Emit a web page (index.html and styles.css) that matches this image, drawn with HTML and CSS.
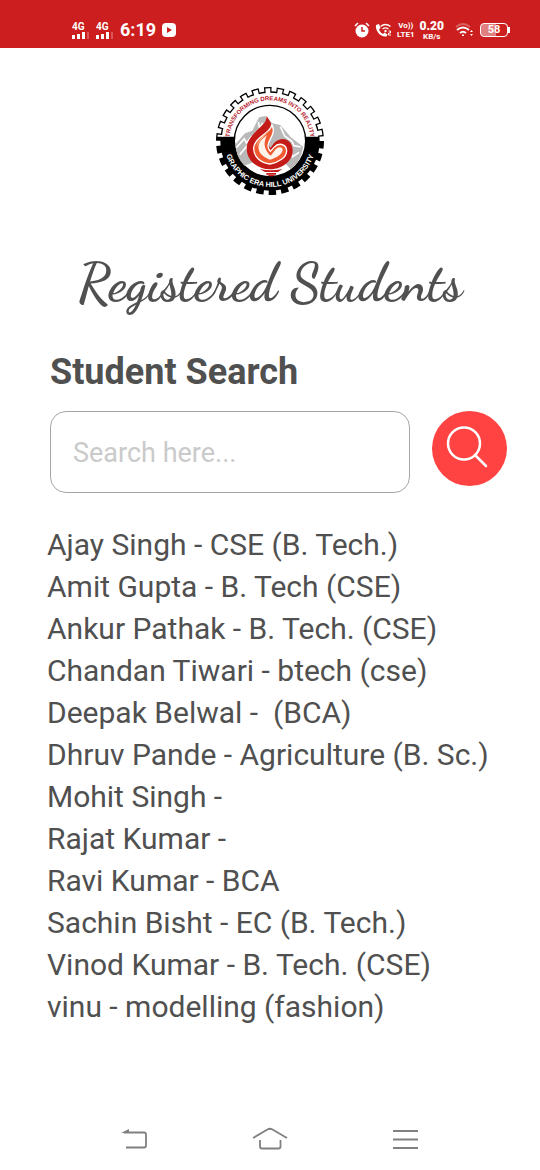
FILE: index.html
```html
<!DOCTYPE html>
<html lang="en">
<head>
<meta charset="utf-8">
<meta name="viewport" content="width=device-width, initial-scale=1">
<title>Registered Students</title>
<link rel="stylesheet" href="styles.css">
</head>
<body>
<header class="status">
  <div class="status-group">
    <div class="signal"><span>4G</span>
      <svg width="18" height="7" viewBox="0 0 18 7" fill="#fff"><path d="M0 3h3v4H0zM5 2h3v5H5zM10 0h3v7h-3z"/><path d="M15 0h2v7h-2z" opacity=".25"/></svg></div>
    <div class="signal"><span>4G</span>
      <svg width="18" height="7" viewBox="0 0 18 7" fill="#fff"><path d="M0 3h3v4H0zM5 2h3v5H5zM10 0h3v7h-3z"/><path d="M15 0h2v7h-2z" opacity=".25"/></svg></div>
    <time class="clock">6:19</time>
    <svg width="14" height="14" viewBox="0 0 14 14"><rect width="14" height="14" rx="4" fill="#fff"/><path d="M5 4l5 3-5 3z" fill="#cc1e1e"/></svg>
  </div>
  <div class="status-group status-right">
    <svg width="16" height="16" viewBox="0 0 16 16"><circle cx="8" cy="9" r="6.5" fill="#fff"/><path d="M1 4l3-3M15 4l-3-3" stroke="#fff" stroke-width="1.6"/><path d="M8 5v4h3" fill="none" stroke="#cc1e1e" stroke-width="1.5"/></svg>
    <svg width="17" height="16" viewBox="0 0 17 16"><path d="M1 3l3-1 1.500 4L4 7.500c1 2.500 2 3.500 4 4.500l1.500-1.500 3 2-1 2C6 15.500 0 9 1 3z" fill="#fff"/><path d="M5.500 4.500q5-4 10 0M7.500 7q3-2.200 6 0" fill="none" stroke="#fff" stroke-width="1.4"/><circle cx="10.500" cy="9" r="1.200" fill="#fff"/><path d="M13.500 9h2v2h-2v2h2.500" fill="none" stroke="#fff"/></svg>
    <div class="volte"><span>Vo))</span><span>LTE1</span></div>
    <div class="rate"><b>0.20</b><span>KB/s</span></div>
    <svg width="18" height="16" viewBox="0 0 18 16" fill="none" stroke="#fff" stroke-width="2"><path d="M1 5q7-6 14 0" opacity=".3"/><path d="M2 8q6-5 12 0M5 11q3-2.500 6 0"/><path d="M7 13h2l-1 1z" stroke-width="1"/><path d="M15 10l1.500-2L18 10zM15 12l1.500 2L18 12z" fill="#fff" stroke="none"/></svg>
    <div class="battery"><span>58</span></div>
  </div>
</header>

<main class="page">
  <svg class="logo" viewBox="33 36 324 324" role="img" aria-label="Graphic Era Hill University">
    <defs>
      <clipPath id="upper"><path d="M33 36h324v149H33z"/></clipPath>
      <path id="arc-top" d="M73 198a122 122 0 0 1 244 0"/>
      <path id="arc-low" d="M57 198a138 138 0 0 0 276 0"/>
    </defs>
    <circle cx="195" cy="198" r="149"/>
    <circle cx="195" cy="198" r="154" fill="none" stroke="#000" stroke-width="16" pathLength="260" stroke-dasharray="6 4"/>
    <g clip-path="url(#upper)">
      <circle cx="195" cy="198" r="145" fill="#fff"/>
      <circle cx="195" cy="198" r="150" fill="none" stroke="#fff" stroke-width="16" pathLength="260" stroke-dasharray="4 6" stroke-dashoffset="-1"/>
    </g>
    <circle cx="195" cy="198" r="107" fill="#fff" stroke="#000" stroke-width="4"/>
    <path d="M92 207l28-32 22-8 20-40 18-4 22 22 24 5 31 36 37 29q-5 44-37 68l-20-22-28 17h-38l-24-17-29 11q-26-26-26-65z" fill="#b9b9b9"/>
    <path d="M94 218l24-27 6 13 17-21M226 155l13 28 21 15 7 14 20 4M104 239l20-24 9 23M243 250l13-24 6 20 20-14M160 141l4 20 9-17" fill="none" stroke="#fff" stroke-width="5"/>
    <path d="M184 122C192 152 124 174 125 223c2 36 34 60 70 60 38-1 69-25 68-58-1-31-31-44-55-22l-12 16c-20-28 28-48-12-97z" fill="#c41a18"/>
    <path d="M200 148c2 24-52 38-54 70-1 28 22 46 49 49 26-4 50-20 50-40-1-20-24-26-38-10l-11 12c-24-27 24-47 4-81z" fill="#f05a30" stroke="#fff" stroke-width="4"/>
    <path d="M186 180c-20 16-28 28-25 43 3 15 17 25 34 31 19-5 37-16 38-29 0-10-13-11-21-2l-15 19c-17-16-25-34-11-62z" fill="#fff3ec"/>
    <path d="M193 157c-2 18-39 34-38 61 4-20 30-33 38-61z" fill="#ffb58c"/>
    <path d="M164 282q33 8 68 0l-13 9h-39zM184 294h29v5h-29zM188 300h21l-4 4h-12z" fill="#c41a18"/>
    <text class="motto"><textPath href="#arc-top" startOffset="50%">TRANSFORMING DREAMS INTO REALITY</textPath></text>
    <text class="university"><textPath href="#arc-low" startOffset="50%">GRAPHIC ERA HILL UNIVERSITY</textPath></text>
  </svg>

  <h1 class="title">Registered Students</h1>

  <form class="search">
    <label class="search-label" for="query">Student Search</label>
    <div class="search-row">
      <input class="search-input" id="query" type="text" placeholder="Search here...">
      <button class="search-button" type="button" aria-label="Search">
        <svg width="75" height="75" viewBox="0 0 75 75" fill="none" stroke="#fff" stroke-width="2.500" stroke-linecap="round"><circle cx="32" cy="32.500" r="16"/><path d="M43 44l11 11"/></svg>
      </button>
    </div>
  </form>

  <ul class="students">
    <li>Ajay Singh - CSE (B. Tech.)</li>
    <li>Amit Gupta - B. Tech (CSE)</li>
    <li>Ankur Pathak - B. Tech. (CSE)</li>
    <li>Chandan Tiwari - btech (cse)</li>
    <li>Deepak Belwal -&nbsp; (BCA)</li>
    <li>Dhruv Pande - Agriculture (B. Sc.)</li>
    <li>Mohit Singh -</li>
    <li>Rajat Kumar -</li>
    <li>Ravi Kumar - BCA</li>
    <li>Sachin Bisht - EC (B. Tech.)</li>
    <li>Vinod Kumar - B. Tech. (CSE)</li>
    <li>vinu - modelling (fashion)</li>
  </ul>
</main>

<nav class="system-nav">
  <button type="button" aria-label="Back"><svg width="36" height="24" viewBox="0 0 36 24"><path d="M7 5.500h20q2 0 2 2v11q0 2-2 2H9" fill="none" stroke="#808080" stroke-width="1.800"/><path d="M4 6l8-4v4z" fill="#808080"/></svg></button>
  <button type="button" aria-label="Home"><svg width="36" height="24" viewBox="0 0 36 24" fill="none" stroke="#808080" stroke-width="1.800"><path d="M1 11L15.500 2.500q2.500-1.500 5 0L35 11M8 13v6.500q0 2 2 2h16.500q2 0 2-2V13"/></svg></button>
  <button type="button" aria-label="Recent apps"><svg width="36" height="24" viewBox="0 0 36 24" fill="none" stroke="#808080" stroke-width="1.800"><path d="M6 4h25M6 12.500h25M6 21h25"/></svg></button>
</nav>
</body>
</html>
```
FILE: styles.css
```css
* { box-sizing: border-box; }

body {
  margin: 0;
  min-height: 100vh;
  display: flex;
  flex-direction: column;
  background: #fff;
  color: #505050;
  font-family: Roboto, "Noto Sans", sans-serif;
}

button {
  padding: 0;
  border: 0;
  background: none;
}

svg { display: block; flex: none; }

.status {
  display: flex;
  justify-content: space-between;
  align-items: center;
  height: 48px;
  padding: 12px 29px 0 72px;
  background: #cc1e1e;
  color: #fff;
}

.status-group {
  display: flex;
  align-items: center;
  gap: 6px;
}

.status-right { gap: 5px; }

.signal {
  width: 18px;
  font-size: 10px;
  font-weight: 700;
  line-height: 10px;
}

.signal span { display: block; }

.clock {
  font-size: 18px;
  font-weight: 700;
  line-height: 24px;
}

.volte,
.rate {
  display: flex;
  flex-direction: column;
  align-items: center;
  font-size: 8px;
  font-weight: 700;
  line-height: 9px;
}

.rate { margin-right: 6px; }

.rate b {
  font-size: 12px;
  line-height: 12px;
}

.battery {
  position: relative;
  width: 28px;
  height: 14px;
  margin: 0 3px 0 2px;
  border: 1px solid #fff;
  border-radius: 4px;
  background: linear-gradient(90deg, #e08080 58%, transparent 58%);
  font-size: 11px;
  font-weight: 700;
  line-height: 12px;
  text-align: center;
}

.battery::after {
  content: "";
  position: absolute;
  top: 3px;
  right: -3px;
  width: 2px;
  height: 6px;
  background: #fff;
}

.page {
  flex: 1;
  padding: 39px 33px 0;
}

.logo {
  width: 108px;
  height: 108px;
  margin: 0 auto;
}

.motto,
.university {
  font-family: "Liberation Sans", Arial, sans-serif;
  font-weight: 700;
  text-anchor: middle;
}

.motto { font-size: 18px; fill: #b5202a; }
.university { font-size: 22px; fill: #fff; }

.title {
  margin: 56px 0 36px;
  font-family: "Dancing Script", cursive;
  font-size: 53px;
  font-weight: 700;
  line-height: 64px;
  text-align: center;
}

.search { padding-left: 17px; }

.search-label {
  display: block;
  font-size: 36px;
  font-weight: 700;
  line-height: 42px;
}

.search-row {
  display: flex;
  align-items: flex-start;
  gap: 22px;
  margin-top: 18px;
}

.search-input {
  flex: 1;
  min-width: 0;
  height: 82px;
  padding: 2px 22px 0;
  border: 1px solid #a6a6a6;
  border-radius: 16px;
  background: #fff;
  color: #505050;
  font-family: inherit;
  font-size: 27px;
}

.search-input::placeholder { color: #cacaca; }

.search-button {
  width: 75px;
  height: 75px;
  border-radius: 50%;
  background: #ff4242;
}

.students {
  margin: 31px 0 0;
  padding: 0 0 0 14px;
  list-style: none;
  font-size: 30px;
  line-height: 42px;
}

.system-nav {
  display: flex;
  justify-content: space-around;
  padding: 0 67px 19px;
}
```
